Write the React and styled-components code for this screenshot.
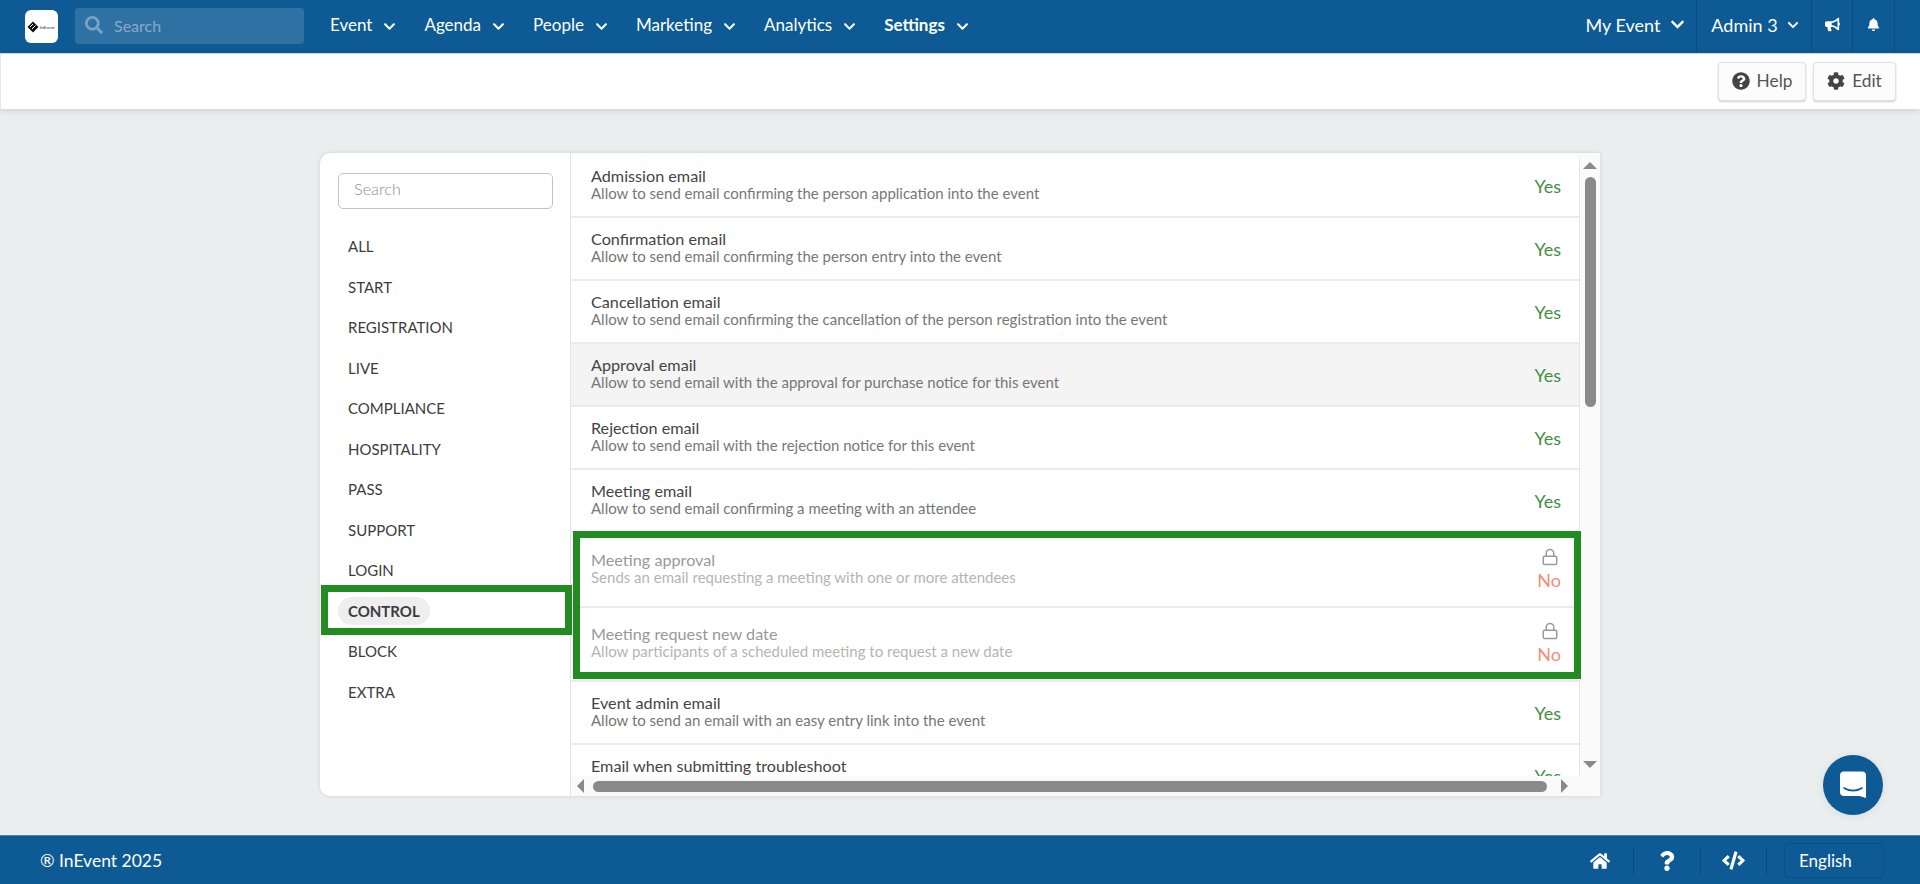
import React from "react";
import styled, { createGlobalStyle } from "styled-components";
import { FaSearch, FaChevronDown, FaBullhorn, FaBell, FaQuestionCircle, FaCog, FaHome, FaQuestion, FaCode } from "react-icons/fa";
import { Lock } from "lucide-react";

const Global = createGlobalStyle`
  html, body { margin: 0; padding: 0; background: #ebeeef; }
  * { box-sizing: border-box; }
  body { font-family: Lato, "Open Sans", sans-serif; color: #444; }
`;
const BLUE = "#0d5a94";

const Page = styled.div`
  min-height: 884px; display: flex; flex-direction: column;
`;
const Header = styled.header`
  height: 53px; background: ${BLUE}; display: flex; align-items: stretch; color: #fff; flex: none;
`;
const LogoBox = styled.div`
  width: 33px; height: 33px; margin: 10px 0 0 25px; background: #fff; border-radius: 6px;
  display: flex; align-items: center; justify-content: center;
`;
const SearchBox = styled.div`
  width: 229px; height: 36px; margin: 8px 0 0 17px; border-radius: 4px; background: rgba(255,255,255,.14);
  display: flex; align-items: center; gap: 11px; padding: 0 0 2px 10px; font-size: 16px; color: rgba(255,255,255,.42);
  svg { font-size: 18px; color: rgba(255,255,255,.35); }
`;
const Nav = styled.nav`
  display: flex; align-items: center; gap: 28px; margin-left: 26px; height: 53px; padding-bottom: 4px;
`;
const NavItem = styled.div`
  display: flex; align-items: center; gap: 11px; font-size: 17px; font-weight: ${p => p.$bold ? 700 : 400};
  svg { font-size: 13px; margin-top: 3px; }
`;
const RightNav = styled.div`
  margin-left: auto; display: flex; align-items: stretch; padding-right: 25px;
`;
const RightCell = styled.div`
  display: flex; align-items: center; justify-content: center; gap: ${p => p.$gap || 0}px;
  font-size: 18px; width: ${p => p.$w}px; border-right: 1px solid rgba(0,0,0,.14);
  padding: 0 0 4px ${p => p.$shift || 0}px;
`;
const ToolBar = styled.div`
  height: 56px; flex: none; background: #fff; border-left: 1px solid #e5e8ea; border-top: 1px solid #c9d6e2;
  box-shadow: 0 2px 6px rgba(0,0,0,.12); display: flex; justify-content: flex-end; align-items: flex-start;
  gap: 7px; padding: 8px 24px 0 0; position: relative;
`;
const ToolButton = styled.button`
  height: 39px; width: ${p => p.$w}px; font: 400 17.3px Lato, sans-serif; color: #555; background: #fcfcfc;
  border: 1px solid #e2e2e2; border-radius: 4px; box-shadow: 0 1px 2px rgba(0,0,0,.2);
  display: flex; align-items: center; justify-content: center; gap: 7px; padding: 0 0 3px;
  svg { color: #444; font-size: 18px; margin-top: 2px; }
`;
const Main = styled.main`
  flex: 1; padding: 44px 320px 39px; display: flex;
`;
const Card = styled.section`
  position: relative; width: 1280px; height: 643px; background: #fff; border-radius: 10px 0 0 10px;
  box-shadow: 0 0 4px rgba(0,0,0,.12); display: grid; grid-template-columns: 251px 1fr; overflow: hidden;
`;
const Side = styled.aside`
  padding: 20px 18px 0; border-right: 1px solid #e2e5e7;
`;
const SideSearch = styled.input`
  display: block; width: 215px; height: 36px; border: 1px solid #b9c8cc; border-radius: 5px; padding: 0 15px 6px;
  font: 300 16.3px Lato, sans-serif; background: #fff; margin-bottom: 17px;
  &::placeholder { color: #8f8f8f; opacity: 1; }
`;
const Cats = styled.div`
  display: flex; flex-direction: column;
`;
const Cat = styled.div`
  height: 40.5px; display: flex; align-items: center; font-size: 15px; color: #3c3c3c;
  padding-left: 10px;
  ${p => p.$active && `
    font-weight: 700;
    span { background: #eeeeee; border-radius: 14px; height: 28px; line-height: 28px; padding: 0 10px; margin-left: -10px; }
  `}
`;
const Right = styled.div`
  padding-top: 2px; display: grid; grid-template-columns: 1fr 20px; grid-template-rows: 1fr 20px; min-height: 0; background: #fafafa;
`;
const Viewport = styled.div`
  overflow: hidden; background: #fff; border-right: 1px solid #e4e7e9; border-radius: 0 6px 0 0; min-height: 0;
`;
const Row = styled.div`
  height: ${p => p.$locked ? 74.5 : 63}px; padding: 0 18px 0 20px; display: flex; align-items: center; justify-content: space-between;
  border-bottom: 2px solid #e8ebed; background: ${p => p.$hover ? "#f4f4f4" : "#fff"};
`;
const RowText = styled.div`
  opacity: ${p => p.$locked ? .55 : 1}; display: flex; flex-direction: column; margin-top: ${p => p.$locked ? -3 : -4}px;
`;
const Title = styled.div`
  font-size: 16.2px; line-height: 19px; color: #444;
`;
const Sub = styled.div`
  font-size: 15px; line-height: 17px; color: #777;
`;
const Status = styled.div`
  display: flex; flex-direction: column; align-items: center; gap: 3px; font-size: 18px; line-height: 22px;
  color: ${p => p.$no ? "#f28c7a" : "#3f8f3f"};
  svg { color: #999; margin-left: 2px; }
`;
const VBar = styled.div`
  grid-column: 2; grid-row: 1 / 3; position: relative; display: flex; flex-direction: column; align-items: center;
`;
const ArrowUp = styled.div`
  width: 0; height: 0; border: 7px solid transparent; border-top: 0; border-bottom: 7px solid #8a8a8a; margin-top: 7px;
`;
const VThumb = styled.div`
  width: 11px; height: 230px; background: #8a8a8a; border-radius: 6px; margin-top: 8px;
`;
const ArrowDown = styled.div`
  width: 0; height: 0; border: 7px solid transparent; border-bottom: 0; border-top: 7px solid #8a8a8a; position: absolute; top: 606px;
`;
const HBar = styled.div`
  grid-column: 1; grid-row: 2; display: flex; align-items: center; padding: 0 0 0 6px;
  background: #fafafa; z-index: 1;
`;
const ArrowLeft = styled.div`
  width: 0; height: 0; border: 7px solid transparent; border-left: 0; border-right: 7px solid #8a8a8a;
`;
const HThumb = styled.div`
  width: 954px; height: 11px; background: #8a8a8a; border-radius: 6px; margin: 1px 14px 0 9px;
`;
const ArrowRight = styled.div`
  width: 0; height: 0; border: 7px solid transparent; border-right: 0; border-left: 7px solid #8a8a8a;
`;
const Highlight = styled.div`
  position: absolute; border: 7px solid #228b22; pointer-events: none;
  left: ${p => p.$l}px; top: ${p => p.$t}px; width: ${p => p.$w}px; height: ${p => p.$h}px;
`;
const Footer = styled.footer`
  height: 49px; flex: none; background: ${BLUE}; border-top: 1px solid #4b86b4; color: #fff; display: flex; align-items: center;
  padding: 1px 36px 0 40px; font-size: 17.5px;
`;
const FootRight = styled.div`
  margin-left: auto; display: flex; align-items: center;
`;
const FootIcon = styled.div`
  width: 66.5px; height: 28px; display: flex; align-items: center; justify-content: center; font-size: ${p => p.$size || 20}px;
  border-right: 1px solid rgba(0,0,0,.18);
`;
const Lang = styled.div`
  width: 100px; height: 35px; margin-left: 17px; border: 1px solid rgba(0,0,0,.1); border-radius: 4px;
  display: flex; align-items: center; padding-left: 14px; font-size: 17px;
`;
const Chat = styled.div`
  position: absolute; left: 1823px; top: 755px; width: 60px; height: 60px; border-radius: 50%; background: ${BLUE};
  box-shadow: 0 1px 10px rgba(0,0,0,.08); display: flex; align-items: center; justify-content: center;
`;

const rows = [
  ["Admission email", "Allow to send email confirming the person application into the event"],
  ["Confirmation email", "Allow to send email confirming the person entry into the event"],
  ["Cancellation email", "Allow to send email confirming the cancellation of the person registration into the event"],
  ["Approval email", "Allow to send email with the approval for purchase notice for this event", "hover"],
  ["Rejection email", "Allow to send email with the rejection notice for this event"],
  ["Meeting email", "Allow to send email confirming a meeting with an attendee"],
  ["Meeting approval", "Sends an email requesting a meeting with one or more attendees", "locked"],
  ["Meeting request new date", "Allow participants of a scheduled meeting to request a new date", "locked"],
  ["Event admin email", "Allow to send an email with an easy entry link into the event"],
  ["Email when submitting troubleshoot", "Allow to send an email when submitting troubleshoot"],
];
const cats = ["ALL", "START", "REGISTRATION", "LIVE", "COMPLIANCE", "HOSPITALITY", "PASS", "SUPPORT", "LOGIN", "CONTROL", "BLOCK", "EXTRA"];
const nav = ["Event", "Agenda", "People", "Marketing", "Analytics", "Settings"];

const Logo = () => (
  <svg width="30" height="12" viewBox="0 0 30 12">
    <path d="M6 0.5 L11.5 6 L6 11.5 L0.5 6 Z" fill="#111" />
    <path d="M3 6 L6 3 M5 8 L8.5 4.5" stroke="#fff" strokeWidth="1" />
    <text x="13" y="8" fontSize="4.4" fontFamily="Lato, sans-serif" fill="#222">InEvent</text>
  </svg>
);

const ChatIcon = () => (
  <svg width="28" height="30" viewBox="0 0 28 30">
    <path d="M4 1.5 H22 a4 4 0 0 1 4 4 V28 L19.5 26 H4 a4 4 0 0 1 -4 -4 V5.5 a4 4 0 0 1 4 -4 Z" fill="#fff" transform="translate(1 0)" />
    <path d="M5 18 C10 21.5 18 21.5 23 18" fill="none" stroke={BLUE} strokeWidth="1.6" strokeLinecap="round" />
  </svg>
);

export default function App() {
  return (
    <Page>
      <Global />
      <Header>
        <LogoBox><Logo /></LogoBox>
        <SearchBox><FaSearch />Search</SearchBox>
        <Nav>
          {nav.map(n => (
            <NavItem key={n} $bold={n === "Settings"}>{n}<FaChevronDown /></NavItem>
          ))}
        </Nav>
        <RightNav>
          <RightCell $w={125} $gap={10} $shift={3}>My Event<FaChevronDown size={15} /></RightCell>
          <RightCell $w={115} $gap={9} $shift={2}>Admin 3<FaChevronDown size={12} /></RightCell>
          <RightCell $w={41}><FaBullhorn size={15} /></RightCell>
          <RightCell $w={42}><FaBell size={13} /></RightCell>
        </RightNav>
      </Header>
      <ToolBar>
        <ToolButton $w={88}><FaQuestionCircle />Help</ToolButton>
        <ToolButton $w={83}><FaCog />Edit</ToolButton>
      </ToolBar>
      <Main>
        <Card>
          <Side>
            <SideSearch placeholder="Search" />
            <Cats>
              {cats.map(c => <Cat key={c} $active={c === "CONTROL"}><span>{c}</span></Cat>)}
            </Cats>
          </Side>
          <Right>
            <Viewport>
              {rows.map(([t, s, kind]) => (
                <Row key={t} $locked={kind === "locked"} $hover={kind === "hover"}>
                  <RowText $locked={kind === "locked"}>
                    <Title>{t}</Title>
                    <Sub>{s}</Sub>
                  </RowText>
                  {kind === "locked"
                    ? <Status $no><Lock size={18} strokeWidth={2} />No</Status>
                    : <Status>Yes</Status>}
                </Row>
              ))}
            </Viewport>
            <VBar>
              <ArrowUp />
              <VThumb />
              <ArrowDown />
            </VBar>
            <HBar>
              <ArrowLeft />
              <HThumb />
              <ArrowRight />
            </HBar>
          </Right>
          <Highlight $l={1} $t={432} $w={251} $h={50} />
          <Highlight $l={253} $t={378} $w={1008} $h={148} />
        </Card>
      </Main>
      <Footer>
        ® InEvent 2025
        <FootRight>
          <FootIcon><FaHome /></FootIcon>
          <FootIcon><FaQuestion /></FootIcon>
          <FootIcon $size={23}><FaCode /></FootIcon>
          <Lang>English</Lang>
        </FootRight>
      </Footer>
      <Chat><ChatIcon /></Chat>
    </Page>
  );
}
